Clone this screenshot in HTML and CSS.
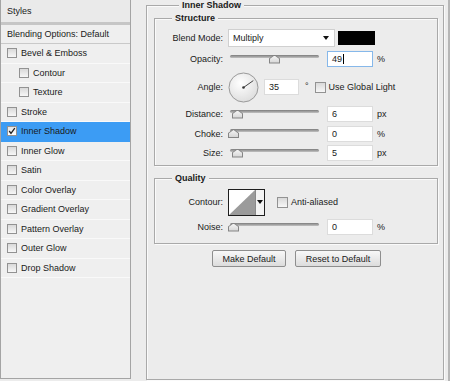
FILE: index.html
```html
<!doctype html>
<html>
    <head>
        <title>Layer Style - Inner Shadow</title>
        <meta charset="UTF-8">
        <link rel="stylesheet" href="styles.css">
    </head>
    <body>
      <div class="dialog">

        <div class="styles-list">
          <div class="list-title">Styles</div>
          <div class="list-blend">Blending Options: Default</div>
          <ul class="fx-list">
            <li class="fx"><span class="check"></span>Bevel &amp; Emboss</li>
            <li class="fx sub"><span class="check"></span>Contour</li>
            <li class="fx sub"><span class="check"></span>Texture</li>
            <li class="fx"><span class="check"></span>Stroke</li>
            <li class="fx active"><span class="check on"><svg width="8" height="8" viewBox="0 0 8 8"><polyline points="1.2,4 3,6.5 6.8,1.2" fill="none" stroke="#222" stroke-width="1.3"/></svg></span>Inner Shadow</li>
            <li class="fx"><span class="check"></span>Inner Glow</li>
            <li class="fx"><span class="check"></span>Satin</li>
            <li class="fx"><span class="check"></span>Color Overlay</li>
            <li class="fx"><span class="check"></span>Gradient Overlay</li>
            <li class="fx"><span class="check"></span>Pattern Overlay</li>
            <li class="fx"><span class="check"></span>Outer Glow</li>
            <li class="fx"><span class="check"></span>Drop Shadow</li>
          </ul>
        </div>

        <div class="settings">
          <div class="group main-group">
            <div class="title main-title">Inner Shadow</div>

            <div class="group structure">
              <div class="title">Structure</div>

              <div class="row row-blend">
                <span class="lbl">Blend Mode:</span>
                <div class="select">Multiply<span class="caret"></span></div>
                <span class="swatch"></span>
              </div>

              <div class="row row-opacity">
                <span class="lbl">Opacity:</span>
                <div class="slider"><span class="thumb" style="left: 39px"></span></div>
                <div class="field focus">49<span class="cursor"></span></div>
                <span class="unit">%</span>
              </div>

              <div class="row row-angle">
                <span class="lbl">Angle:</span>
                <svg class="dial" width="31" height="31" viewBox="0 0 31 31">
                  <defs>
                    <radialGradient id="dialfill" cx="0.4" cy="0.35" r="0.7">
                      <stop offset="0" stop-color="#ffffff"/>
                      <stop offset="1" stop-color="#dcdcdc"/>
                    </radialGradient>
                  </defs>
                  <circle cx="15.5" cy="15.5" r="14.5" fill="url(#dialfill)" stroke="#9a9a9a"/>
                  <line x1="15.5" y1="15.5" x2="25.3" y2="8.6" stroke="#444" stroke-width="1"/>
                  <circle cx="15.5" cy="15.5" r="1.3" fill="#333"/>
                </svg>
                <div class="field angle-field">35</div>
                <span class="deg">°</span>
                <span class="check global"></span>
                <span class="check-text">Use Global Light</span>
              </div>

              <div class="row">
                <span class="lbl">Distance:</span>
                <div class="slider"><span class="thumb" style="left: 2px"></span></div>
                <div class="field">6</div>
                <span class="unit">px</span>
              </div>

              <div class="row row-choke">
                <span class="lbl">Choke:</span>
                <div class="slider"><span class="thumb" style="left: -2px"></span></div>
                <div class="field">0</div>
                <span class="unit">%</span>
              </div>

              <div class="row">
                <span class="lbl">Size:</span>
                <div class="slider"><span class="thumb" style="left: 2px"></span></div>
                <div class="field">5</div>
                <span class="unit">px</span>
              </div>
            </div>

            <div class="group quality">
              <div class="title">Quality</div>

              <div class="row row-contour">
                <span class="lbl">Contour:</span>
                <div class="contour">
                  <svg class="curve" width="26" height="25" viewBox="0 0 26 25">
                    <polygon points="0,25 26,0 26,25" fill="#9b9b9b"/>
                  </svg>
                  <span class="contour-drop"><span class="caret"></span></span>
                </div>
                <span class="check anti"></span>
                <span class="check-text">Anti-aliased</span>
              </div>

              <div class="row">
                <span class="lbl">Noise:</span>
                <div class="slider"><span class="thumb" style="left: -2px"></span></div>
                <div class="field">0</div>
                <span class="unit">%</span>
              </div>
            </div>

            <div class="buttons">
              <button type="button" class="btn make">Make Default</button>
              <button type="button" class="btn reset">Reset to Default</button>
            </div>
          </div>
        </div>

      </div>
    </body>
</html>
```

FILE: styles.css
```css
body {
  margin: 0;
  background: #ececec;
  font-family: "Liberation Sans", Arial, sans-serif;
  font-size: 9px;
  color: #1a1a1a;
}

.dialog {
  display: flex;
  height: 381px;
}

/* left column : list of layer effects */

.styles-list {
  box-sizing: border-box;
  width: 131px;
  height: 379px;
  border: 1px solid #a4a4a4;
  border-top: none;
  background: #efefef;
  margin-right: 15px;
  flex-shrink: 0;
}

.list-title {
  height: 22px;
  line-height: 23px;
  padding-left: 6px;
  background: #eaeaea;
  border-bottom: 3px solid #c6c6c6;
}

.list-blend {
  height: 18px;
  line-height: 18px;
  padding-left: 6px;
  border-bottom: 1px solid #c9c9c9;
}

.fx-list {
  list-style: none;
  margin: 0;
  padding: 0;
}

.fx {
  box-sizing: border-box;
  height: 19.5px;
  display: flex;
  align-items: center;
  padding-left: 6px;
  border-bottom: 1px solid #f9f9f9;
}

.fx.sub {
  padding-left: 18px;
}

.fx.active {
  background: #3c9cf4;
  border-bottom-color: #3c9cf4;
}

.check {
  box-sizing: border-box;
  width: 10px;
  height: 10px;
  border: 1px solid #929292;
  background: linear-gradient(#d9d9d9, #f7f7f7);
  margin-right: 4px;
  flex-shrink: 0;
  display: flex;
  align-items: center;
  justify-content: center;
}

.check.on {
  background: linear-gradient(#e4e4e4, #ffffff);
}

.check svg {
  display: block;
}

/* right side : effect settings */

.settings {
  width: 302px;
  flex-shrink: 0;
  border-right: 2px solid #b6b6b6;
}

.group {
  border: 1px solid #a9a9a9;
  box-shadow: inset 1px 1px 0 #fafafa, 1px 1px 0 #fafafa;
}

/* group caption sitting on the top border line */
.title {
  width: fit-content;
  margin: -7px 0 0 17px;
  padding: 0 3px;
  line-height: 12px;
  font-weight: bold;
  background: #ececec;
}

.main-title {
  margin-left: 32px;
}

.main-group {
  box-sizing: border-box;
  width: 298px;
  height: 375px;
  margin-top: 5px;
}

.structure {
  margin: 7px 5px 0 7px;
  padding: 0 0 2px 0;
}

.structure .title {
  margin-bottom: 4px;
}

.quality {
  margin: 12px 5px 0 7px;
  padding: 0 0 6px 0;
}

.quality .title {
  margin-bottom: 3px;
}

.row {
  display: flex;
  align-items: center;
  height: 20px;
}

.row-opacity {
  height: 22px;
}

.row-angle {
  height: 34px;
}

.row-choke {
  height: 19px;
}

.row-contour {
  height: 30px;
}

.lbl {
  width: 68px;
  margin-right: 7px;
  text-align: right;
  flex-shrink: 0;
}

.select {
  box-sizing: border-box;
  width: 107px;
  height: 18px;
  margin-left: -2px;
  padding-left: 4px;
  display: flex;
  align-items: center;
  background: #fff;
  border: 1px solid #d0d0d0;
}

.caret {
  width: 0;
  height: 0;
  border-left: 3px solid transparent;
  border-right: 3px solid transparent;
  border-top: 4px solid #111;
}

.select .caret {
  margin-left: auto;
  margin-right: 5px;
}

.swatch {
  width: 37px;
  height: 14px;
  margin-left: 3px;
  background: #000;
}

.slider {
  position: relative;
  width: 89px;
  height: 9px;
  margin-right: 8px;
  flex-shrink: 0;
}

.slider::before {
  content: "";
  position: absolute;
  left: 0;
  right: 0;
  top: 0;
  height: 3px;
  border-radius: 2px;
  background: linear-gradient(#7c7c7c, #c2c2c2);
}

.thumb {
  position: absolute;
  top: 0;
  width: 11px;
  height: 9px;
  background: #858585;
  clip-path: polygon(50% 0, 100% 45%, 100% 100%, 0 100%, 0 45%);
}

.thumb::after {
  content: "";
  position: absolute;
  left: 1px;
  top: 1px;
  right: 1px;
  bottom: 1px;
  background: linear-gradient(#f4f4f4, #d6d6d6);
  clip-path: polygon(50% 0, 100% 45%, 100% 100%, 0 100%, 0 45%);
}

.field {
  box-sizing: border-box;
  width: 46px;
  height: 16px;
  line-height: 14px;
  padding-left: 4px;
  background: #fff;
  border: 1px solid #dcdcdc;
  display: flex;
  align-items: center;
  flex-shrink: 0;
}

.field.focus {
  border-color: #86b8ea;
}

.cursor {
  width: 1px;
  height: 10px;
  background: #000;
  margin-left: 1px;
}

.unit {
  margin-left: 4px;
}

.dial {
  margin-left: -2px;
  flex-shrink: 0;
}

.angle-field {
  width: 35px;
  margin-left: 5px;
}

.deg {
  margin-left: 6px;
  margin-top: -3px;
}

.check.global {
  width: 11px;
  height: 11px;
  margin-left: 6px;
  margin-right: 3px;
}

.contour {
  box-sizing: border-box;
  width: 37px;
  height: 27px;
  margin-left: -2px;
  display: flex;
  border: 1px solid #1e1e1e;
  background: #fff;
}

.curve {
  display: block;
}

.contour-drop {
  flex: 1;
  display: flex;
  align-items: center;
  justify-content: center;
  border-left: 1px solid #8a8a8a;
  background: #f3f3f3;
}

.check.anti {
  width: 11px;
  height: 11px;
  margin-left: 12px;
  margin-right: 3px;
}

.buttons {
  display: flex;
  justify-content: center;
  gap: 9px;
  margin-top: 6px;
  padding-left: 3px;
}

.btn {
  box-sizing: border-box;
  height: 17px;
  padding: 0;
  font-family: "Liberation Sans", Arial, sans-serif;
  font-size: 9px;
  color: #1a1a1a;
  border: 1px solid #8e8e8e;
  border-radius: 2px;
  background: linear-gradient(#f8f8f8, #dcdcdc);
}

.btn.make {
  width: 74px;
}

.btn.reset {
  width: 86px;
}
```
